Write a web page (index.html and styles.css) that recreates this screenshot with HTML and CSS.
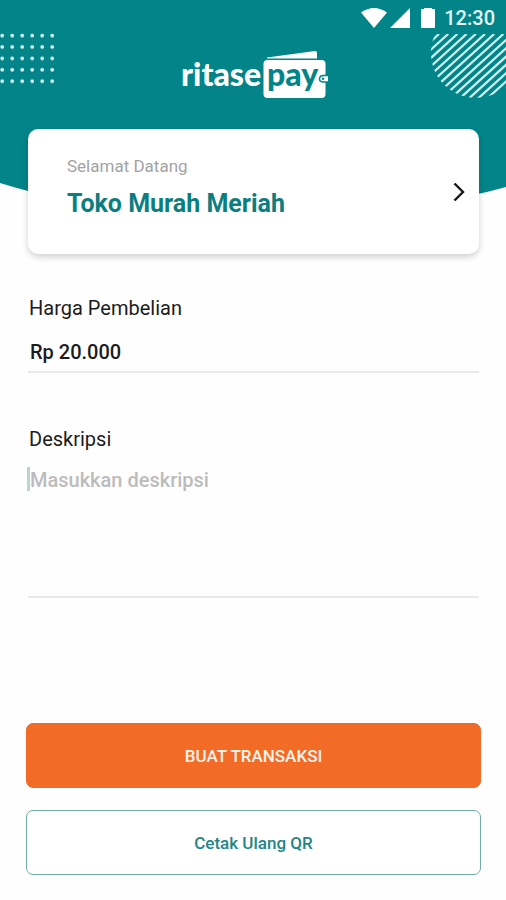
FILE: index.html
```html
<!DOCTYPE html>
<html lang="id">
<head>
<meta charset="utf-8">
<meta name="viewport" content="width=device-width, initial-scale=1">
<title>Ritase Pay</title>
<link rel="stylesheet" href="styles.css">
</head>
<body>
<div class="app">
  <div class="backdrop" aria-hidden="true">
    <svg class="curve" viewBox="0 0 506 212" preserveAspectRatio="none"><path fill="#028488" d="M0 0H506V187Q470 197 430 203Q253 224 80 203Q35 194 0 183Z"/></svg>
    <svg class="dots" width="56" height="56" viewBox="0 0 56 56">
      <defs><pattern id="dot" width="10" height="11.4" patternUnits="userSpaceOnUse"><circle cx="2.2" cy="2.6" r="1.9" fill="#d6f0f0"/></pattern></defs>
      <rect width="56" height="56" fill="url(#dot)"/>
    </svg>
    <svg class="stripes" width="76" height="66" viewBox="0 0 76 66">
      <defs><clipPath id="disc"><circle cx="46" cy="19" r="45"/></clipPath></defs>
      <g clip-path="url(#disc)"><path stroke="#c9eeee" stroke-width="2.300" fill="none" d="M9 0l-73 66M18.200 0l-73 66M27.400 0l-73 66M36.600 0l-73 66M45.800 0l-73 66M55 0l-73 66M64.200 0l-73 66M73.400 0l-73 66M82.600 0l-73 66M91.800 0l-73 66M101 0l-73 66M110.200 0l-73 66M119.400 0l-73 66M128.600 0l-73 66M137.800 0l-73 66"/></g>
    </svg>
  </div>

  <header class="header">
    <div class="status">
      <svg width="26" height="20" viewBox="0 0 26 20" aria-hidden="true"><path fill="#fff" d="M0 4.500Q13-4.500 26 4.500L13 20Z"/></svg>
      <svg width="20" height="20" viewBox="0 0 20 20" aria-hidden="true"><path fill="#fff" d="M20 0V20H0Z"/></svg>
      <svg class="battery" width="14" height="20" viewBox="0 0 14 20" aria-hidden="true"><path fill="#fff" d="M3 0H11V1H13Q14 1 14 2V19Q14 20 13 20H1Q0 20 0 19V2Q0 1 1 1H3Z"/></svg>
      <time>12:30</time>
    </div>
    <svg class="logo" width="146" height="50" viewBox="0 0 146 50" role="img" aria-label="ritasepay">
      <path fill="#fff" d="M86 8.500V7.500L134 1Q136 1 136 3V8.500Z"/>
      <rect x="82.500" y="10" width="62" height="38" rx="4" fill="#fff"/>
      <text class="logo-text" x="0" y="36" fill="#fff">ritase</text>
      <text class="logo-text" x="86" y="36" fill="#028488">pay</text>
      <path fill="#fff" stroke="#028488" stroke-width="1.500" d="M147 25.500H142.500Q138.500 25.500 138.500 29Q138.500 32 142.500 32H147"/>
      <circle cx="142" cy="28.700" r="1.200" fill="#028488"/>
    </svg>
  </header>

  <main class="content">
    <a class="card" href="#toko">
      <span class="card-text">
        <span class="greeting">Selamat Datang</span>
        <strong class="store">Toko Murah Meriah</strong>
      </span>
      <svg width="12" height="20" viewBox="0 0 12 20" aria-hidden="true"><path fill="none" stroke="#171717" stroke-width="2.400" d="M1.500 1.500L10 10L1.500 18.500"/></svg>
    </a>

    <form class="form">
      <label class="label" for="harga">Harga Pembelian</label>
      <input class="field amount" id="harga" type="text" value="Rp 20.000">
      <label class="label label-next" for="deskripsi">Deskripsi</label>
      <div class="description">
        <span class="caret" aria-hidden="true"></span>
        <textarea class="field area" id="deskripsi" placeholder="Masukkan deskripsi"></textarea>
      </div>
      <div class="actions">
        <button class="button primary" type="button">BUAT TRANSAKSI</button>
        <button class="button secondary" type="button">Cetak Ulang QR</button>
      </div>
    </form>
  </main>
</div>
</body>
</html>
```
FILE: styles.css
```css
* {
  box-sizing: border-box;
}

body {
  margin: 0;
  background: #fefefe;
  font-family: Roboto, "Liberation Sans", sans-serif;
  color: #1c1c1c;
}

svg {
  display: block;
  flex: none;
}

.app {
  position: relative;
  min-height: 100vh;
  display: flex;
  flex-direction: column;
}

.backdrop {
  position: absolute;
  inset: 0 0 auto;
  overflow: hidden;
}

.curve {
  width: 100%;
  height: 212px;
}

.dots {
  position: absolute;
  top: 33px;
  left: 0;
}

.stripes {
  position: absolute;
  top: 34px;
  right: 0;
}

.header {
  position: relative;
  display: flex;
  flex-direction: column;
  align-items: center;
  gap: 16px;
  padding-bottom: 29px;
}

.status {
  align-self: stretch;
  height: 34px;
  display: flex;
  align-items: center;
  justify-content: flex-end;
  gap: 3px;
  padding: 1px 11px 0 0;
  color: #e4f5f5;
  font-size: 20px;
  font-weight: 500;
}

.battery {
  margin: 0 6px 0 8px;
}

.logo {
  margin-left: 2px;
  overflow: visible;
}

.logo-text {
  font-family: Lato, sans-serif;
  font-size: 32px;
  font-weight: 900;
}

.content {
  position: relative;
  flex: 1;
  display: flex;
  flex-direction: column;
  padding: 0 25px 25px 26px;
}

.card {
  display: flex;
  align-items: center;
  justify-content: space-between;
  height: 125px;
  margin: 0 2px;
  padding: 0 14px 0 39px;
  background: #fff;
  border-radius: 10px;
  box-shadow: 0 3px 6px rgba(0, 0, 0, 0.18);
  text-decoration: none;
}

.card-text {
  display: flex;
  flex-direction: column;
  gap: 10px;
  padding-bottom: 6px;
}

.greeting {
  color: #a3a3a3;
  font-size: 17px;
  line-height: 20px;
}

.store {
  color: #0b7e80;
  font-size: 25px;
  font-weight: 700;
  line-height: 36px;
}

.form {
  flex: 1;
  display: flex;
  flex-direction: column;
  padding-top: 42px;
}

.label {
  margin: 0 3px;
  font-size: 20px;
  line-height: 24px;
}

.label-next {
  margin-top: 54px;
}

.field {
  height: 53px;
  margin: 0 2px;
  padding: 17px 2px 0;
  border: 0;
  border-bottom: 2px solid #e9e9e9;
  border-radius: 0;
  outline: 0;
  background: transparent;
  color: #1c1c1c;
  font: 500 20px/24px Roboto, "Liberation Sans", sans-serif;
}

.amount {
  padding: 20px 2px 7px;
}

.description {
  position: relative;
  display: flex;
}

.area {
  flex: 1;
  height: 147px;
  resize: none;
}

.area::placeholder {
  color: #bcbcbc;
}

.caret {
  position: absolute;
  top: 16px;
  left: 1px;
  width: 3px;
  height: 24px;
  background: #bcd3cf;
}

.actions {
  display: grid;
  gap: 22px;
  margin-top: auto;
}

.button {
  height: 65px;
  border: 1px solid #72aaa5;
  border-radius: 7px;
  font: 500 17px/20px Roboto, "Liberation Sans", sans-serif;
}

.primary {
  border-color: #f26c27;
  background: #f26c27;
  color: #fff3eb;
}

.secondary {
  background: #fff;
  color: #238584;
}
```
